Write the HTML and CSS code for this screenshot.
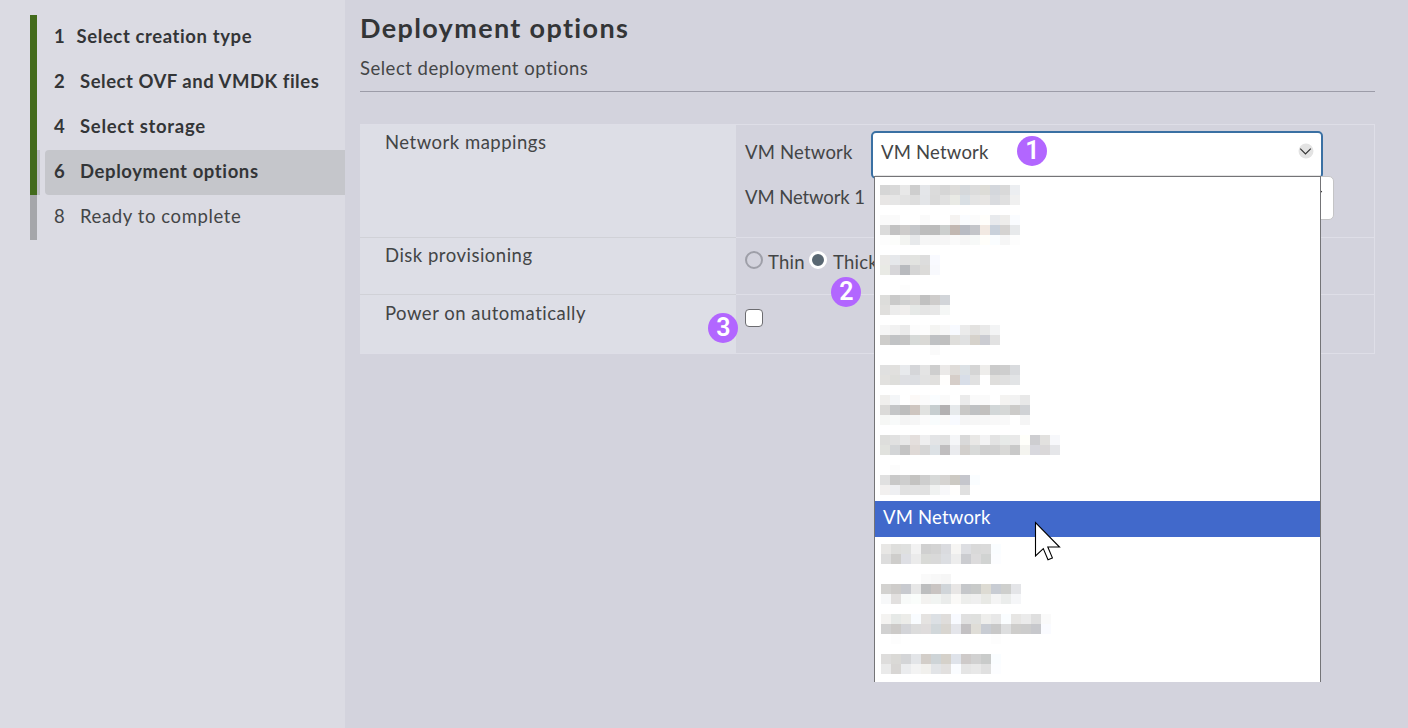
FILE: index.html
```html
<!DOCTYPE html>
<html lang="en">
<head>
<meta charset="utf-8">
<title>Deployment options</title>
<link rel="stylesheet" href="styles.css">
</head>
<body>
<div class="wizard">
  <nav class="sidebar">
    <ol class="steps">
      <li class="step done s1"><div class="step-body"><span class="num">1</span><span class="name">Select creation type</span></div></li>
      <li class="step done s2"><div class="step-body"><span class="num">2</span><span class="name">Select OVF and VMDK files</span></div></li>
      <li class="step done s4"><div class="step-body"><span class="num">4</span><span class="name">Select storage</span></div></li>
      <li class="step done active s6"><div class="step-body"><span class="num">6</span><span class="name">Deployment options</span></div></li>
      <li class="step s8"><div class="step-body"><span class="num">8</span><span class="name">Ready to complete</span></div></li>
    </ol>
  </nav>
  <main class="content">
    <h1 class="title">Deployment options</h1>
    <p class="subtitle">Select deployment options</p>
    <div class="grid">
      <div class="row mappings">
        <div class="label">Network mappings</div>
        <div class="value">
          <div class="mapping">
            <span class="net-name">VM Network</span>
            <div class="select focused">
              <span class="net-name">VM Network</span>
              <svg class="chevron" width="16" height="16" viewBox="0 0 16 16"><circle cx="8" cy="8" r="7.5" fill="#e3e3e3"/><path d="M2.2 5.7 7.5 11 12.8 5.7" fill="none" stroke="#333" stroke-width="1.2"/></svg>
            </div>
          </div>
          <div class="mapping second">
            <span class="net-name one">VM Network 1</span>
            <div class="select"><svg class="chevron" width="16" height="16" viewBox="0 0 16 16"><path d="M2.2 5.2 7.5 10.5 12.8 5.2" fill="none" stroke="#333" stroke-width="1.2"/></svg></div>
          </div>
        </div>
      </div>
      <div class="row disk">
        <div class="label">Disk provisioning</div>
        <div class="value radios">
          <span class="radio"></span><span class="radio-text">Thin</span>
          <span class="radio checked"></span><span class="radio-text">Thick</span>
        </div>
      </div>
      <div class="row power">
        <div class="label">Power on automatically</div>
        <div class="value"><span class="checkbox"></span></div>
      </div>
    </div>
  </main>
  <ul class="dropdown" id="networks"></ul>
  <span class="badge b1">1</span>
  <span class="badge b2">2</span>
  <span class="badge b3">3</span>
  <svg class="cursor" width="28" height="42" viewBox="0 0 28 42"><path d="M1.5 1.5V35L9.3 27.6 14 38.8 18.4 36.9 13.8 26H25.5Z" fill="#fff" stroke="#000" stroke-width="1.1"/></svg>
</div>
<script src="networks.js"></script>
</body>
</html>
```

FILE: styles.css
```css
* { box-sizing: border-box; }
body {
  margin: 0;
  background: #d3d3dd;
  color: #434546;
  font-family: Lato, "Open Sans", sans-serif;
  font-size: 18.5px;
  line-height: 24px;
}
.wizard { position: relative; display: flex; width: 1408px; height: 728px; overflow: hidden; }
.sidebar { width: 345px; background: #dbdbe3; padding: 15px 0 0 30px; }
.steps { list-style: none; margin: 0; padding: 0; }
.step { display: flex; height: 45px; border-left: 7px solid #a5a6aa; padding-left: 8px; white-space: nowrap; }
.step.done { border-left-color: #436b1c; font-weight: 700; color: #333537; }
.step.active { padding-left: 0; }
.step.active::before { content: ""; width: 3px; margin-right: 5px; background: #bebfc4; }
.step-body { flex: 1; display: flex; align-items: center; padding: 0 0 4px 9px; }
.active .step-body { background: #c5c6cb; border-radius: 4px 0 0 4px; }
.num { width: 26px; }
.s1 .num { width: 22.5px; }
.step .name { letter-spacing: .6px; }
.s2 .name { letter-spacing: .52px; }
.s4 .name { letter-spacing: .7px; }

.content { flex: 1; padding: 11px 33px 0 15px; }
.title { margin: 0; font-size: 27px; line-height: 34px; font-weight: 700; color: #333537; letter-spacing: 1.35px; }
.subtitle { margin: 0; height: 47px; padding-top: 11px; border-bottom: 1px solid #9c9ca8; letter-spacing: .5px; }
.grid { margin-top: 32px; height: 230px; border: 1px solid #dedee7; border-left: 0; }
.row { display: flex; }
.mappings { height: 112px; }
.disk { height: 57px; }
.power { height: 59px; }
.label { width: 376px; background: #dddee6; padding: 5px 0 0 25px; letter-spacing: .5px; }
.value { flex: 1; padding-left: 9px; }
.disk .label, .power .label { border-top: 1px solid #d0d1d7; }
.disk .value, .power .value { border-top: 1px solid #dedee7; }
.power .label { padding-top: 6px; }
.value.radios { display: flex; padding-top: 13px; }
.mapping { display: flex; align-items: center; height: 48px; margin-top: 6px; }
.mapping.second { height: 44px; margin-top: -3px; }
.mapping > .net-name { width: 126px; padding-bottom: 6px; white-space: nowrap; }
.mapping > .net-name.one { width: 136px; padding-bottom: 3px; letter-spacing: -.1px; }
.net-name { letter-spacing: .2px; }
.select { display: flex; align-items: center; justify-content: space-between; width: 452px; height: 48px; background: #fff; border: 2px solid #3a70a3; border-radius: 5px; padding: 0 7px 0 8px; }
.select > .net-name { padding-bottom: 6px; }
.select .chevron { margin-bottom: 9px; }
.second .select { width: 453px; height: 44px; border: 1px solid #c4c4c6; justify-content: flex-end; padding-right: 8px; }
.radio { width: 18px; height: 18px; border: 2px solid #9e9fa8; border-radius: 50%; }
.radio.checked { margin-left: 5px; background: #596772; border: 3px solid #fff; }
.radio-text { margin: -1px 0 0 5px; width: 36px; white-space: nowrap; letter-spacing: .2px; }
.checked + .radio-text { margin-left: 6px; }
.checkbox { display: block; margin-top: 14px; width: 18px; height: 18px; background: #fff; border: 1.5px solid #6c6c70; border-radius: 4px; }

.dropdown { position: absolute; left: 874px; top: 176px; width: 447px; height: 506px; margin: 0; padding: 0; list-style: none; background: #fff; border: 1px solid #747477; border-bottom: 0; overflow: hidden; box-shadow: 0 -2px 0 -1px #e4e4e4; }
.option { height: 36px; padding-left: 5px; }
.option svg { display: block; }
.option.selected { background: #4169cb; color: #fff; padding: 4px 0 0 8px; letter-spacing: .2px; }
.selected ~ .option { padding-left: 6px; }
.badge { position: absolute; width: 30px; height: 30px; border-radius: 50%; background: #b266ff; color: #fff; font: 600 25px/30px Roboto, "Liberation Sans", sans-serif; text-align: center; }
.b1 { left: 1017.4px; top: 135.5px; }
.b2 { left: 831.4px; top: 276.5px; }
.b3 { left: 708.4px; top: 313.4px; }
.cursor { position: absolute; left: 1034px; top: 521px; }
```

FILE: networks.js
```js
// Each redacted entry: vertical offset inside its row, then rows of 10px cells.
// Two-digit cells are gray levels, six-digit cells are full colours.
const entries = [
  [8, "d6 d9 e8 ce e4e6e9 db d6 dddcda d5d8db dc dddcd7 d4d7dc d9 eceef1",
      "e8e6e5 e6 e2 de e3e5e8 da e1 e9eae5 d9dfe4 e4 e7e5e3 d9dbdf e0 f0"],
  [2, "fa fa ff ff fa ff ff f5f3f1 fafcff fb fffefb e8eaed eeedeb fafcff",
      "db c2 cecccb c5c7ca bd bc cccfce c2b8b2 b8bbc3 c4c5c9 f2e9e2 c9d1db d5d3d1 e7e9eb",
      "fd fcfdfb f3f4f1 e7e9eb f6 f5 f6 fa f6 f7f9f8 fffefa fafdff f6 fd"],
  [6, "eae9e7 e6e8eb e2 e2e3e0 dd f9faff",
      "e9eae5 d7d6d9 b8babe d5 dcdbd9 f8f9fd"],
  [0, "ff ff fd ff ff ff ff",
      "dddddb ca d1 d6d5d3 c1 cecccb d2d5d9",
      "e0dfdd ec f0eeed e6e9e7 e5 e7 f5f7f6"],
  [4, "f6 f1 eb fc fd f4f4f2 f7 f8faff eb e3e2e0 e9 f3f4f5",
      "cecdcb c1c3c5 c5 d7dad8 dad9d6 bfc1c3 c0 dfdedb e0e1e2 d6d2cb cbccd2 e2",
      "ff ff ff ff ff fa ff ff ff ff ff ff"],
  [8, "e0 e1e0de e8eaed d5d6d9 e4 ce ebe9e8 dfdcd9 dce1e5 d5 eeedeb cb ce d9dbde",
      "e2e1df dededb dedfe3 dcdee2 e2 e1e0de fffefd d6cec9 d8dee8 e1 ff dfdedc e0 e2e4e6"],
  [2, "f0efed f4f6f8 ff fcf9f7 fb fafdff fa ff eb fa fa ff f4f3f1 f2 e8",
      "dbdad8 c4c6c8 bd cec5bf e1e2e0 c6ced0 b3b1b2 e6e9eb c9c8c6 bfc1c3 c2c0be d2d7d8 d6d8d7 cccbc9 d0d2d5",
      "f6f7f5 f8fafa f4 f6 fb f8fcfd fa f8faff f5 f6 f7 f8 f9 ff f5"],
  [6, "dededc e1 e8 e4dfdd efeff0 e3e4e6 e2 f5f6f8 d9 e9e8e6 f3f3f4 e3 e7eae8 e9 fffffa ceced1 e2e1df f7f8fb",
      "e1e2de d3d5d7 c4 dfd9d6 d6 dce1e5 c0bebf eaebee d2cfcc d8dad9 d0 d1 d9d9d7 c9 f4f4ef d8d8de dad8d9 e5e6e9"],
  [0, "ff fc ff ff ff ff ff ff ff",
      "e0 c8 ce c4c3c1 ce d7d9d8 d6d4d2 ccc9c3 c5c6cc fafdff",
      "f2f0ef eeeff2 e1 e2 e1 f0f2f1 f8f8fa fffefd e0"],
  null,
  [7, "e8e7e5 dededc dfe0df f2 d0 d3 dadbdf f6f5f3 dddee2 d9 da fafdff",
      "dd cecdcb dedfe4 eb d9dad7 d9 dcdee2 ed cbccd0 dcdbdc d1d3d2 fcfdff"],
  [1, "ff ff ff ff fa f8 f6 ff ff ff ff ff ff ff",
      "d3d2d0 ceccca c8cacf e7 bdbebf c9c4c2 d0d5d9 e8e6e5 c5c7ca c8cac9 dddbd3 c8ccd3 cecfcd e4e5e8",
      "f7f8f9 e2e0df f8faf9 fafdfb f3f2f0 f1f4f2 eaeceb faf9f7 edeeec ef e8e9e5 f4 ebedec f5f6f8"],
  [5, "f4f3f1 e6e9e7 ecece9 f9fcff e5e3e1 dce0e4 dfdddb f8faff e0 dfe0de eeeeec e8 fafdff e7e6e4 eb df fa",
      "d1 cccac8 d3d4d8 dc dfdcdc d1d7da d8d5d0 e4e5ea c3c1c3 dfddd7 c8ccd3 c8 dddedf cecdcb cc c7c8cc fafbff",
      "ff fd ff ff ff ff ff ff ff ff ff fd ff ff ff ff ff"],
  [9, "dedddc dad9d6 d4d5d7 e3e5e8 d3cec9 ced4d7 d5d1ca dfe3ea cecac9 d1 c9cbca fafdff",
      "ea d8d6d4 ebecee f3 f1f0ed e2e4e7 e2e0df fafcff e5 e8 e0 fcfdff"]
];

const list = document.getElementById("networks");
for (const entry of entries) {
  const item = document.createElement("li");
  item.className = "option";
  if (!entry) {
    item.classList.add("selected");
    item.textContent = "VM Network";
  } else {
    const [top, ...rows] = entry;
    let cells = "";
    rows.forEach((row, y) => row.split(" ").forEach((c, x) => {
      const colour = c.length === 2 ? c + c + c : c;
      cells += `<rect x="${x * 10}" y="${top + y * 10}" width="10" height="10" fill="#${colour}"/>`;
    }));
    item.innerHTML = `<svg width="200" height="36" viewBox="0 0 200 36" shape-rendering="crispEdges">${cells}</svg>`;
  }
  list.append(item);
}
```
